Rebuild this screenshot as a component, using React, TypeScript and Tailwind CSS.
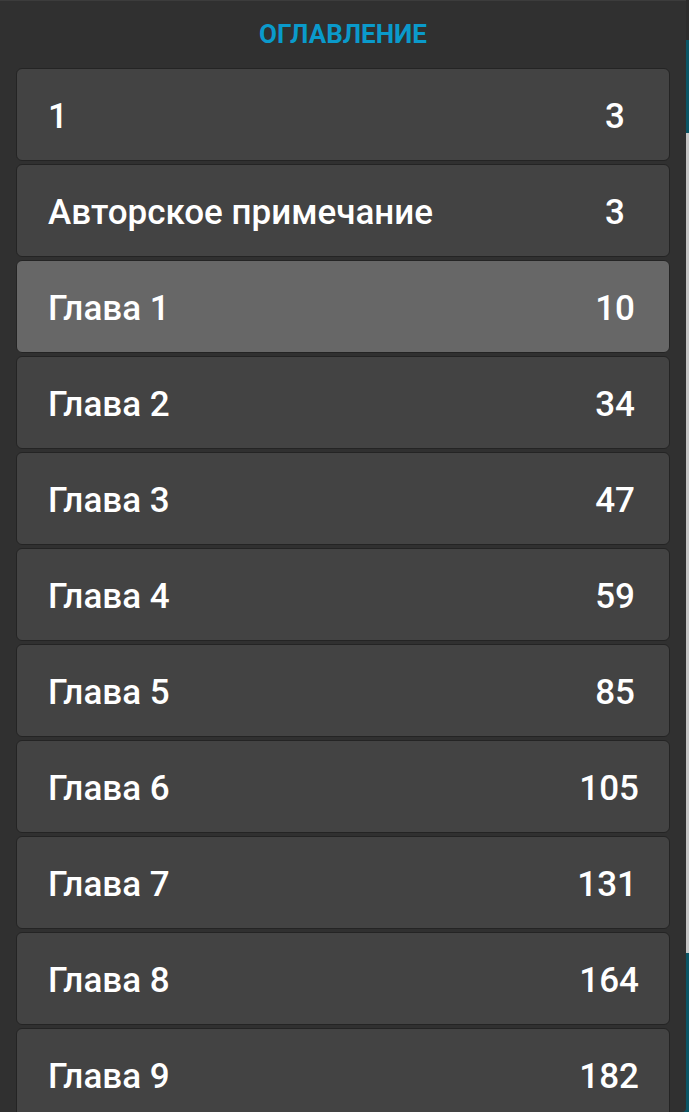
import React from 'react';

const items = [
  { t: '1', p: '3', pr: 'pr-[44px]' },
  { t: 'Авторское примечание', p: '3', pr: 'pr-[44px]' },
  { t: 'Глава 1', p: '10', pr: 'pr-[34px]', on: true },
  { t: 'Глава 2', p: '34', pr: 'pr-[34px]' },
  { t: 'Глава 3', p: '47', pr: 'pr-[34px]' },
  { t: 'Глава 4', p: '59', pr: 'pr-[34px]' },
  { t: 'Глава 5', p: '85', pr: 'pr-[34px]' },
  { t: 'Глава 6', p: '105', pr: 'pr-[30px]' },
  { t: 'Глава 7', p: '131', pr: 'pr-[32px]' },
  { t: 'Глава 8', p: '164', pr: 'pr-[30px]' },
  { t: 'Глава 9', p: '182', pr: 'pr-[30px]' },
];

export default function App() {
  return (
    <div className="flex h-[1112px] w-[689px] overflow-hidden bg-[#0b5565] font-['Roboto',sans-serif]">
      <div className="h-full w-[686px] shrink-0 overflow-hidden rounded-br-[4px] border-t border-[#3c3c3c] bg-[#303030]">
        <div className="flex h-[67px] items-center justify-center">
          <span className="text-[26px] font-bold text-[#0a9acb]">ОГЛАВЛЕНИЕ</span>
        </div>
        <div className="px-4">
          {items.map((it) => (
            <div
              key={it.t}
              className={`mb-[3px] flex h-[93px] items-center justify-between rounded-[6px] border border-[#242424] pt-[6px] pl-[31px] text-[35px] font-medium text-white ${it.pr} ${it.on ? 'bg-[#676767]' : 'bg-[#434343]'}`}
            >
              <span>{it.t}</span>
              <span>{it.p}</span>
            </div>
          ))}
        </div>
      </div>
      <div className="flex w-[3px] flex-col">
        <div className="h-[40px] bg-[#2c2c2c]" />
        <div className="h-[93px] bg-[#0b5565]" />
        <div className="h-[820px] bg-[#c6c6c6]" />
        <div className="flex-1 bg-[#0b5565]" />
      </div>
    </div>
  );
}
